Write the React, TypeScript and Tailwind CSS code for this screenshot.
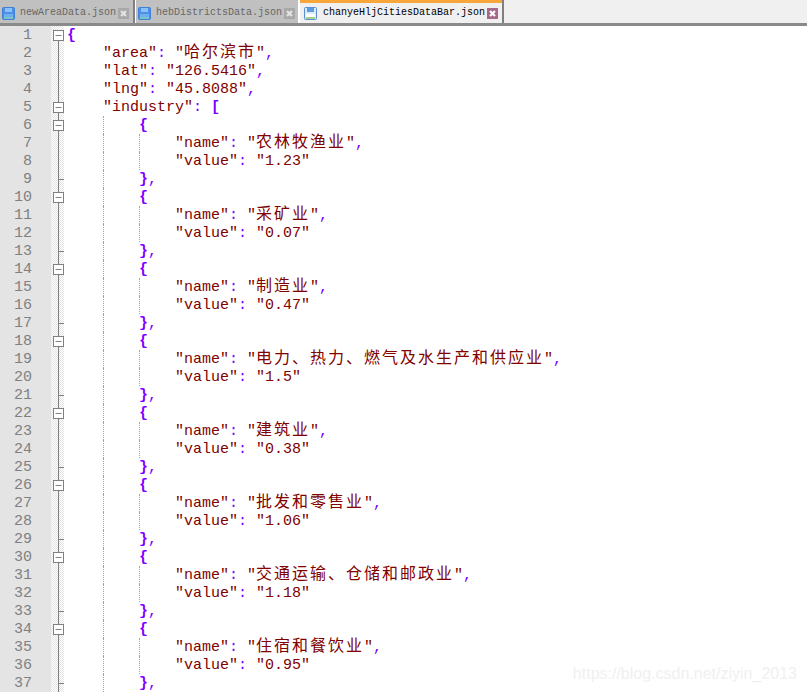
type Row =
  | { kind: 'open' | 'close' | 'plain'; text: string; key?: string; value?: string; comma?: boolean; depth: number; fold?: boolean; tick?: boolean };

const industries = [
  ['农林牧渔业', '1.23'],
  ['采矿业', '0.07'],
  ['制造业', '0.47'],
  ['电力、热力、燃气及水生产和供应业', '1.5'],
  ['建筑业', '0.38'],
  ['批发和零售业', '1.06'],
  ['交通运输、仓储和邮政业', '1.18'],
  ['住宿和餐饮业', '0.95'],
];

const rows: Row[] = [
  { kind: 'open', text: '{', depth: 0, fold: true },
  { kind: 'plain', text: '', key: 'area', value: '哈尔滨市', comma: true, depth: 1 },
  { kind: 'plain', text: '', key: 'lat', value: '126.5416', comma: true, depth: 1 },
  { kind: 'plain', text: '', key: 'lng', value: '45.8088', comma: true, depth: 1 },
  { kind: 'open', text: '[', key: 'industry', depth: 1, fold: true },
];

industries.forEach(([name, value]) => {
  rows.push({ kind: 'open', text: '{', depth: 2, fold: true });
  rows.push({ kind: 'plain', text: '', key: 'name', value: name, comma: true, depth: 3 });
  rows.push({ kind: 'plain', text: '', key: 'value', value, depth: 3 });
  rows.push({ kind: 'close', text: '}', comma: true, depth: 2, tick: true });
});

function SaveIcon({ active }: { active?: boolean }) {
  return (
    <svg width="13" height="13" viewBox="0 0 13 13" className="shrink-0">
      <rect x="0.5" y="0.5" width="12" height="12" rx="1" fill={active ? '#dcebfa' : '#4a90e8'} stroke={active ? '#5b8fd0' : '#3f7fd8'} />
      <rect x="3" y="1" width="7" height="4" fill={active ? '#5b9be0' : '#8cc0f4'} />
      <rect x="2" y="7" width="9" height="5" fill={active ? '#ffffff' : '#6fb0ee'} />
      <rect x="2" y="10" width="9" height="2" fill={active ? '#9fd08a' : '#7cc4c8'} />
    </svg>
  );
}

function CloseIcon({ active }: { active?: boolean }) {
  return (
    <svg width="11" height="11" viewBox="0 0 11 11" className="shrink-0">
      <rect width="11" height="11" fill={active ? '#a8688a' : '#a8a8a8'} />
      <path d="M3 3l5 5M8 3l-5 5" stroke={active ? '#ffffff' : '#e4e4e4'} strokeWidth="2.2" />
    </svg>
  );
}

function Tab({ label, width, active }: { label: string; width: string; active?: boolean }) {
  return (
    <div className={`flex h-[23px] items-center border-t-[3px] ${width} ${active ? 'border-[#faa63a] bg-[#f0f0f0] pl-[4px] text-black' : 'border-[#c0c0c0] bg-[#c0c0c0] pl-[2px] text-[#666666]'}`}>
      <SaveIcon active={active} />
      <span className={`text-[10px] leading-none ${active ? 'ml-[6px]' : 'ml-[5px]'}`}>{label}</span>
      <span className="ml-[2px]">
        <CloseIcon active={active} />
      </span>
    </div>
  );
}

function FoldCell({ row, first }: { row: Row; first: boolean }) {
  return (
    <svg width="13" height="18" viewBox="0 0 13 18" className="block">
      <path d={first ? 'M7.5 9V18' : 'M7.5 0V18'} stroke="#808080" />
      {row.tick && <path d="M7.5 9.5H13" stroke="#808080" />}
      {row.fold && (
        <>
          <rect x="2.5" y="4.5" width="10" height="10" fill="#ffffff" stroke="#808080" />
          <path d="M4.5 9.5H10.5" stroke="#808080" />
        </>
      )}
    </svg>
  );
}

function Code({ row }: { row: Row }) {
  const cjk = row.value !== undefined && /[^\x00-\x7f]/.test(row.value);
  return (
    <span className={`whitespace-pre text-[#800000] ${cjk ? '' : 'pt-px'}`}>
      {row.key && (
        <>
          {`"${row.key}"`}
          <span className="text-[#8000ff]">: </span>
        </>
      )}
      {row.value !== undefined && (
        <>
          "
          {cjk ? <span className="text-[16px] tracking-[2px]">{row.value}</span> : row.value}
          "
        </>
      )}
      {row.text && <span className="font-bold text-[#8000ff]">{row.text}</span>}
      {row.comma && <span className="text-[#8000ff]">,</span>}
    </span>
  );
}

export default function App() {
  return (
    <div className="relative h-[692px] w-[807px] overflow-hidden bg-white font-['Liberation_Mono','Noto_Sans_CJK_SC',monospace]">
      {/* Tab bar */}
      <div className="flex h-[26px] border-b-[3px] border-b-[#8a8a8a] bg-[#f0f0f0]">
        <Tab label="newAreaData.json" width="w-[133px]" />
        <div className="h-[23px] w-[3px] border-l-2 border-[#808080] bg-white" />
        <Tab label="hebDistrictsData.json" width="w-[162px]" />
        <div className="h-[23px] w-[2px] bg-white" />
        <Tab label="chanyeHljCitiesDataBar.json" width="w-[202px]" active />
        <div className="h-[23px] w-[2px] bg-[#808080]" />
      </div>

      {/* Editor */}
      <div className="text-[15px] leading-[18px]">
        {rows.map((row, i) => (
          <div key={i} className="flex h-[18px]">
            <div className="w-[51px] shrink-0 bg-[#e4e4e4] pr-[19px] pt-px text-right text-[#808080]">{i + 1}</div>
            <div className="h-[18px] w-[13px] shrink-0 bg-[repeating-conic-gradient(#e4e4e4_0_25%,#ffffff_0_50%)] bg-[length:2px_2px]">
              <FoldCell row={row} first={i === 0} />
            </div>
            <div className="flex pl-[3px]">
              {i >= 5 && <div className="h-[18px] w-[36px] shrink-0" />}
              {i >= 5 && <div className="h-[18px] w-[36px] shrink-0 border-l border-dotted border-[#a0a0a0]" />}
              {i >= 5 && row.depth === 3 && <div className="h-[18px] w-[36px] shrink-0 border-l border-dotted border-[#a0a0a0]" />}
              {i < 5 && row.depth === 1 && <div className="h-[18px] w-[36px] shrink-0" />}
              <Code row={row} />
            </div>
          </div>
        ))}
      </div>

      {/* Watermark */}
      <div className="absolute bottom-[10px] right-[10px] font-['Liberation_Sans',sans-serif] text-[16px] leading-none text-[#f0f0f0]">
        https://blog.csdn.net/ziyin_2013
      </div>
    </div>
  );
}
